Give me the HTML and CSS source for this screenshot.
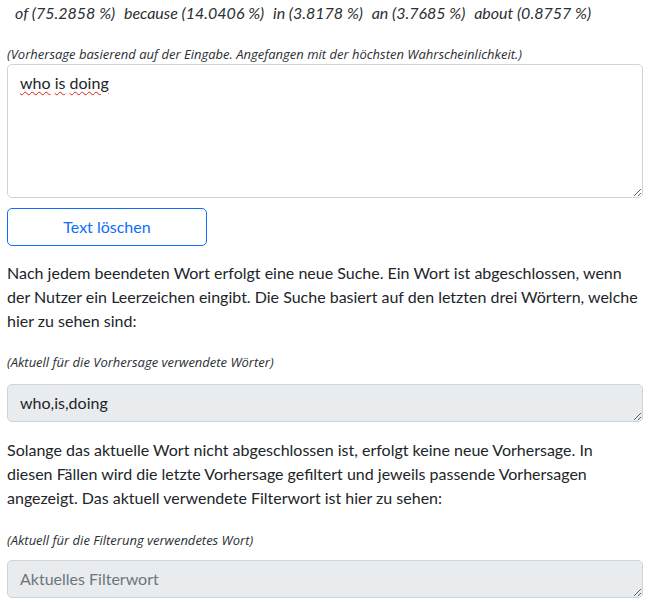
FILE: index.html
```html
<!DOCTYPE html>
<html lang="de">
<head>
<meta charset="utf-8">
<title>Vorhersage</title>
<link rel="stylesheet" href="styles.css">
</head>
<body>
<div class="page">
  <div class="predictions">
    <span class="pred">of (75.2858 %)</span>
    <span class="pred">because (14.0406 %)</span>
    <span class="pred">in (3.8178 %)</span>
    <span class="pred">an (3.7685 %)</span>
    <span class="pred">about (0.8757 %)</span>
  </div>
  <div class="label label-first">(Vorhersage basierend auf der Eingabe. Angefangen mit der höchsten Wahrscheinlichkeit.)</div>
  <div class="field field-main"><span class="typo">who</span> <span class="typo">is</span> <span class="typo">doing</span></div>
  <button class="btn-outline" type="button">Text löschen</button>
  <p class="text">Nach jedem beendeten Wort erfolgt eine neue Suche. Ein Wort ist abgeschlossen, wenn der Nutzer ein Leerzeichen eingibt. Die Suche basiert auf den letzten drei Wörtern, welche hier zu sehen sind:</p>
  <div class="label label-second">(Aktuell für die Vorhersage verwendete Wörter)</div>
  <div class="field field-readonly">who,is,doing</div>
  <p class="text text-second">Solange das aktuelle Wort nicht abgeschlossen ist, erfolgt keine neue Vorhersage. In diesen Fällen wird die letzte Vorhersage gefiltert und jeweils passende Vorhersagen angezeigt. Das aktuell verwendete Filterwort ist hier zu sehen:</p>
  <div class="label label-third">(Aktuell für die Filterung verwendetes Wort)</div>
  <div class="field field-readonly field-last"><span class="placeholder">Aktuelles Filterwort</span></div>
</div>
</body>
</html>
```

FILE: styles.css
```css
* { box-sizing: border-box; }

html, body {
  margin: 0;
  padding: 0;
  background: #ffffff;
}

body {
  font-family: Lato, "Open Sans", "Noto Sans", sans-serif;
  font-size: 16px;
  line-height: 24px;
  color: #212529;
}

.page {
  width: 643px;
  padding-left: 7px;
}

.predictions {
  height: 24px;
  padding-top: 1px;
  padding-left: 8px;
  font-style: italic;
  white-space: nowrap;
  color: #2b2f33;
}

.pred {
  margin-right: 5px;
}

.label {
  font-family: "Open Sans", "Noto Sans", sans-serif;
  font-size: 13px;
  line-height: 19px;
  font-style: italic;
  color: #2b2f33;
}

.label-first { margin-top: 21px; }
.label-second { margin-top: 20px; margin-bottom: 12px; }
.label-third { margin-top: 21px; margin-bottom: 10px; }

.field {
  width: 636px;
  border: 1px solid #ced4da;
  border-radius: 5px;
  padding: 6px 12px;
  background: #ffffff;
  resize: vertical;
  overflow: auto;
  color: #212529;
}

.field-main {
  height: 134px;
}

.field-readonly {
  height: 38px;
  background: #e9ecef;
}

.typo {
  text-decoration: underline wavy #e0201a;
  text-decoration-thickness: 1px;
  text-underline-offset: 2px;
}

.placeholder {
  color: #6c757d;
}

.btn-outline {
  display: block;
  margin-top: 10px;
  width: 200px;
  height: 38px;
  border: 1px solid #0d6efd;
  border-radius: 5px;
  background: #ffffff;
  color: #0d6efd;
  font-family: inherit;
  font-size: 16px;
  line-height: 24px;
  padding: 6px 12px;
}

.text {
  width: 633px;
  margin: 15px 0 0;
}

.text-second {
  margin-top: 16px;
}
```
